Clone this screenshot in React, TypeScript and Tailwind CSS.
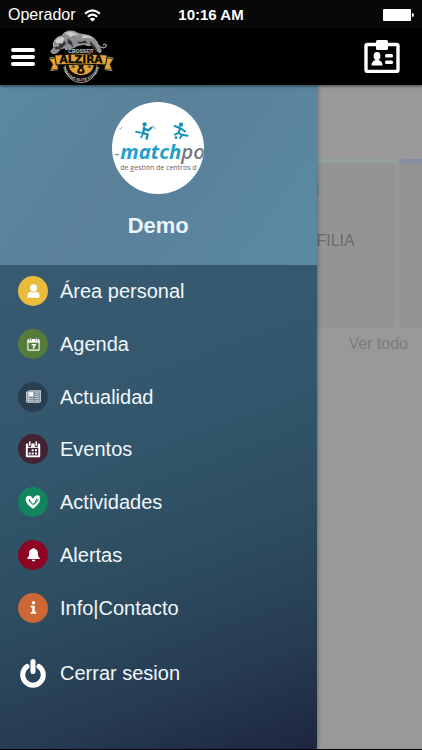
import type { ReactNode } from "react";

const icon = "h-[15px] w-[15px]";

function Person() {
  return (
    <svg viewBox="0 0 24 24" className={icon} fill="#fff" aria-hidden="true">
      <ellipse cx="12" cy="6.5" rx="5.5" ry="6" />
      <path d="M2.5 22v-4q0-4.5 4.5-5.5 5 2.6 10 0 4.500 1 4.500 5.500v4z" />
    </svg>
  );
}

function Agenda() {
  return (
    <svg viewBox="0 0 24 24" className={icon} fill="none" stroke="#fff" aria-hidden="true">
      <rect x="3" y="4" width="18" height="17" rx="1.500" strokeWidth="1.800" />
      <path d="M3 6.500h18" strokeWidth="5" />
      <path d="M7 2v4M17 2v4" stroke="#557c3b" strokeWidth="4" />
      <path d="M7 2v4M17 2v4" strokeWidth="1.600" />
      <path d="M9 12.500h5.500l-3 6" strokeWidth="2.300" />
    </svg>
  );
}

function News() {
  return (
    <svg viewBox="0 0 24 24" className={icon} fill="none" stroke="#c5d1da" aria-hidden="true">
      <path d="M4 3h19v16q0 2-2 2H3q-2 0-2-2V5h3v14" fill="#71828f" strokeWidth="1.800" />
      <rect x="5" y="5" width="7" height="7" fill="#fff" stroke="none" />
      <path d="M14 6h7M14 9h7M14 12h7M5 15h7M14 15h7M5 18h7M14 18h7" strokeWidth="1.500" />
    </svg>
  );
}

function Events() {
  return (
    <svg viewBox="0 0 24 26" className="h-[17px] w-[16px]" aria-hidden="true">
      <rect x="1" y="4" width="22" height="21" rx="2" fill="#fff" />
      <path d="M4 10.500h16V22H4z" fill="#432333" />
      <path d="M7 1v6M17 1v6" stroke="#432333" strokeWidth="5" strokeLinecap="round" />
      <path d="M7 1.500v5M17 1.500v5" stroke="#fff" strokeWidth="2.500" strokeLinecap="round" />
      <path d="M10 12.500h3v3h-3zM15 12.500h3v3h-3zM5.500 17.500h3v3h-3zM10 17.500h3v3h-3zM15 17.500h3v3h-3z" fill="#fff" />
    </svg>
  );
}

function HeartCheck() {
  return (
    <svg viewBox="0 0 24 24" className="h-[16px] w-[16px]" fill="none" aria-hidden="true">
      <path
        d="M20.500 7.500Q21 12 12 19.500 3 13 3.300 8C3.500 4 8 3.500 9.500 7.500L12 12l3-5.500Q17.500 3.500 20 4.500"
        stroke="#fff"
        strokeWidth="4.500"
        strokeLinejoin="round"
        strokeLinecap="round"
      />
      <path d="M13 16.500q5-3.500 7.500-9" stroke="#12855f" strokeWidth="1.300" />
    </svg>
  );
}

function Bell() {
  return (
    <svg viewBox="0 0 24 24" className={icon} fill="#fff" aria-hidden="true">
      <path d="M12 1.500q1.800 0 1.900 1.800C18 4 19 7 19 10.500c0 4 1 5.500 3 7v1.800H2v-1.800c2-1.500 3-3 3-7C5 7 6 4 10.100 3.300Q10.200 1.500 12 1.500z" />
      <path d="M9 20.300h6q-.5 2.700-3 2.700t-3-2.700z" />
    </svg>
  );
}

function Info() {
  return (
    <svg viewBox="0 0 24 24" className={icon} fill="#fff" aria-hidden="true">
      <circle cx="12" cy="4.500" r="2.800" />
      <path d="M7.500 9H14v10h2.500v3h-9v-3H10v-7H7.500z" />
    </svg>
  );
}

function Power() {
  return (
    <svg viewBox="0 0 28 30" className="h-[30px] w-[28px]" fill="none" stroke="#fff" strokeLinecap="round" aria-hidden="true">
      <path d="M8 8.500a10.300 10.300 0 1 0 12 0" strokeWidth="5" />
      <path d="M14 3.500v10" strokeWidth="5" />
    </svg>
  );
}

const items: { label: string; color: string; glyph: ReactNode }[] = [
  { label: "Área personal", color: "bg-[#e9bc3c]", glyph: <Person /> },
  { label: "Agenda", color: "bg-[#557c3b]", glyph: <Agenda /> },
  { label: "Actualidad", color: "bg-[#293f51]", glyph: <News /> },
  { label: "Eventos", color: "bg-[#432333]", glyph: <Events /> },
  { label: "Actividades", color: "bg-[#12855f]", glyph: <HeartCheck /> },
  { label: "Alertas", color: "bg-[#8c0624]", glyph: <Bell /> },
  { label: "Info|Contacto", color: "bg-[#cb6836]", glyph: <Info /> },
];

function Logo() {
  return (
    <svg viewBox="144 86 201 165" className="h-[55px] w-[67px]" role="img" aria-label="CrossFit Alzira">
      <circle cx="243" cy="199" r="48" fill="#0a0a0a" stroke="#b9b1a0" strokeWidth="2.500" />
      <path d="M205 192h76q-2 30-38 33-34-3-38-33z" fill="#e3a332" />
      {/* tail */}
      <path d="M286 124q14 20 26 18 9-3 6-9-5-4-8 1" fill="none" stroke="#9b9c9e" strokeWidth="4" strokeLinecap="round" />
      {/* body and head */}
      <path
        d="M161 142l-1-14 5-10 9-8 12-4 6-8q14-10 30-5 12 7 24 9 24 1 36 12 12 10 12 22l10 14-4 8-12-8-12-16-12 2-12-4-20 4-14 8-8 12-10-2-6-12-12 4-12 12-12 2-6-7z"
        fill="#8d8e90"
        stroke="#c9cacc"
        strokeWidth="2"
        strokeLinejoin="round"
      />
      <path d="M165 121l9-8 12-4 8 6-6 8 2 8-10-4-10 2zM196 99q14-7 26-2l16 10-16-3-10 6zM246 105q22 0 32 11l-14-4-16 2z" fill="#cccdcf" />
      <path d="M178 132l10-3 6-8 4 10-10 10-10 8-5-4zM204 114l12 10 4 18-10-10-8-4zM228 122q14 6 28-2l6 8-24 2zM270 122l14 14 8 14-8-2-14-16z" fill="#34363a" />
      <path d="M163 139l8-4 3 9-6 4z" fill="#1d1e20" />
      <path d="M164 137l4 2 6-5" fill="none" stroke="#fff" strokeWidth="2" />
      <path d="M196 163q47-20 94 0v-13q-47-16-94 0z" fill="#090909" />
      <text x="243" y="158" textAnchor="middle" fontSize="15" fontWeight="700" fill="#c4c4c4" className="font-['Liberation_Sans',sans-serif]">CROSSFIT</text>
      <path d="M147 175l22-3 6 34-24 4 7-18zM341 175l-22-3-6 34 24 4-7-18z" fill="#e3a332" stroke="#111" strokeWidth="2" />
      <path d="M147 173l20-3M341 173l-20-3M151 211l23-3M337 211l-23-3" stroke="#d9cbae" strokeWidth="2" />
      <path d="M164 164q79-8 158 0l-5 30q-74-6-148 0z" fill="#e3a332" stroke="#0b0b0b" strokeWidth="3" />
      <text x="243" y="188" textAnchor="middle" fontSize="32" fontWeight="700" fill="#0c0b08" stroke="#0c0b08" strokeWidth="1" className="font-['DejaVu_Sans',sans-serif]">ALZIRA</text>
      <g fill="#17130a">
        <path d="M234 194h18l-3 8q11 12 0 18h-12q-11-6 0-18z" />
        <circle cx="243" cy="210" r="4" fill="#e3a332" />
      </g>
      <text x="219" y="204" textAnchor="middle" fontSize="10" fontWeight="700" fill="#17130a" className="font-['Liberation_Sans',sans-serif]">20</text>
      <text x="267" y="204" textAnchor="middle" fontSize="10" fontWeight="700" fill="#17130a" className="font-['Liberation_Sans',sans-serif]">18</text>
      <path id="motto" d="M189 196a54 46 0 0 0 108 0" fill="none" />
      <text fontSize="12" fontWeight="700" fill="#c9c3b4" className="font-['Liberation_Sans',sans-serif]">
        <textPath href="#motto" startOffset="50%" textAnchor="middle">FORGING ELITE FITNESS</textPath>
      </text>
    </svg>
  );
}

function Avatar() {
  return (
    <svg viewBox="0 0 276 276" className="h-[92px] w-[92px] rounded-full bg-white" role="img" aria-label="Demo">
      <g fill="none" stroke="#168fb5" strokeWidth="7" strokeLinecap="round" strokeLinejoin="round">
        <circle cx="98" cy="67" r="3" />
        <path d="M96 77l-2 16 13 4-3 13M95 80l14 5 9-8" />
        <path d="M94 93l-14-2-8-2M94 95l-7 11" strokeWidth="5" />
        <path d="M116 77q6-9 14 3" strokeWidth="3" stroke="#7b9daa" />
        <path d="M23 83l6-7" strokeWidth="2" />
        <circle cx="207" cy="68" r="3" />
        <path d="M204 78l-4 14 10 8-6 8M188 72l16 6 15 10M201 92l-12 6M211 98l16 3" strokeWidth="6" />
        <circle cx="192" cy="107" r="2" strokeWidth="4" />
      </g>
      <text y="171" fontSize="61" fontWeight="700" fontStyle="italic" className="font-['Open_Sans',sans-serif]">
        <tspan x="8" fontSize="44" fontWeight="400" fill="#777b80">-</tspan>
        <tspan x="25" fill="#239fca">match</tspan>
        <tspan fill="#777b80" fontWeight="600">po</tspan>
      </text>
      <text x="25" y="204" fontSize="21" fill="#666" className="font-['Open_Sans',sans-serif]">de gestión de centros d</text>
    </svg>
  );
}

export default function App() {
  return (
    <div className="flex min-h-screen flex-col bg-[#999] font-['Liberation_Sans',Arial,sans-serif]">
      <header className="relative z-20 bg-black text-white shadow-[0_1px_3px_rgba(0,0,0,0.6)]">
        <div className="grid h-7 grid-cols-3 items-center bg-[#080808] px-2 pt-0.5">
          <div className="flex items-center gap-2">
            <span className="text-base">Operador</span>
            <svg viewBox="0 0 18 14" className="h-[13px] w-[17px]" fill="none" stroke="#fff" strokeWidth="2.200" aria-label="Wi-Fi">
              <path d="M1 5q8-7 16 0M4 8.300q5-4.500 10 0" />
              <path d="M9 13.500L6 10.800q3-2.500 6 0z" fill="#fff" stroke="none" />
            </svg>
          </div>
          <span className="text-center text-[15px] font-bold">10:16 AM</span>
          <svg viewBox="0 0 32 14" className="h-[14px] w-[32px] justify-self-end" fill="#fff" aria-label="Battery">
            <rect x="1" y="1" width="28" height="12" rx="1" />
            <path d="M30 5q2 0 2 2t-2 2z" />
          </svg>
        </div>
        <div className="flex h-[57px] items-center pr-[22px] pl-[11px]">
          <button type="button" aria-label="Menu" className="flex w-6 flex-col gap-[3px]">
            <span className="h-[4px] rounded-full bg-white" />
            <span className="h-[4px] rounded-full bg-white" />
            <span className="h-[4px] rounded-full bg-white" />
          </button>
          <div className="ml-[13px] flex-1">
            <Logo />
          </div>
          <button type="button" aria-label="Card">
            <svg viewBox="0 0 36 33" className="h-[33px] w-[36px]" fill="#fff" aria-hidden="true">
              <rect x="2" y="4.500" width="32" height="27" rx="1.500" fill="none" stroke="#fff" strokeWidth="3.400" />
              <rect x="12" y="0" width="12" height="10" rx="1.500" />
              <ellipse cx="13" cy="16" rx="3.400" ry="4" />
              <path d="M11.500 18h3v2q4 1 4 5.500h-11q0-4.500 4-5.500z" />
              <rect x="21" y="14" width="8" height="3.500" rx="1.500" />
              <rect x="21" y="20.500" width="8" height="3.500" rx="1.500" />
            </svg>
          </button>
        </div>
      </header>

      <div className="flex flex-1 border-b border-black">
        <aside className="z-10 w-[75%] shrink-0 bg-[linear-gradient(160deg,#385d73_0%,#36596f_35%,#32566b_52%,#2d4c60_70%,#273b53_86%,#1d2541_100%)] shadow-[1px_0_4px_rgba(0,0,0,0.3)]">
          <div className="flex h-[180px] flex-col items-center bg-[linear-gradient(125deg,#5b88a2_0%,#5a8199_40%,#5a829d_58%,#5a8aa4_100%)] pt-[17px]">
            <Avatar />
            <h1 className="mt-4 text-[22px] leading-8 font-bold text-[#e9f3fc]">Demo</h1>
          </div>
          <nav>
            <ul className="grid h-[369px] grid-rows-7">
              {items.map((item) => (
                <li key={item.label}>
                  <a href="#" className="flex h-full items-center gap-3 pl-[18px] text-xl text-[#f1f7fb]">
                    <span className={`flex h-[30px] w-[30px] items-center justify-center rounded-full ${item.color}`}>
                      {item.glyph}
                    </span>
                    {item.label}
                  </a>
                </li>
              ))}
            </ul>
            <button type="button" className="mt-3 flex h-[53px] w-full items-center gap-3 pl-[18px] text-xl text-[#f1f7fb]">
              <span className="flex w-[30px] justify-center">
                <Power />
              </span>
              Cerrar sesion
            </button>
          </nav>
        </aside>

        <main className="min-w-0 flex-1 overflow-hidden pt-[74px]">
          <div className="flex h-[169px] gap-1">
            <section className="w-[78px] shrink-0 border-t-4 border-[#8fa297] bg-[#949496]">
              <div className="-ml-7 mt-3 h-[30px] w-[30px] rounded-full bg-[#778b7f]" />
              <h2 className="mt-6 text-base leading-6 text-[#6a6a6c]">FILIA</h2>
            </section>
            <section className="flex-1 rounded-l-sm border-t-4 border-[#8390a3] bg-[#949496]" />
          </div>
          <div className="flex justify-end pt-1 pr-[14px]">
            <a href="#" className="text-base leading-6 text-[#7c7c7d]">Ver todo</a>
          </div>
        </main>
      </div>
    </div>
  );
}
